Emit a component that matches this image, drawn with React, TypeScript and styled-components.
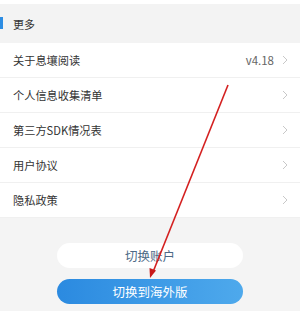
import React from "react";
import styled, { createGlobalStyle } from "styled-components";

const Global = createGlobalStyle`
  html, body {
    margin: 0;
    padding: 0;
    background: #f4f4f4;
  }
  body {
    font-family: "Noto Sans CJK SC", "Noto Sans", sans-serif;
  }
`;

const Page = styled.div`
  position: relative;
  width: 300px;
  height: 311px;
  overflow: hidden;
  background: #f4f4f4;
  border-top: 4px solid #fff;
  box-sizing: border-box;
`;

const SectionHeader = styled.div`
  display: flex;
  align-items: center;
  height: 39px;
  background: #f3f3f3;
`;

const HeaderMark = styled.div`
  width: 3px;
  height: 12px;
  background: #2d8de3;
  margin-right: 10px;
  margin-top: -1px;
`;

const HeaderTitle = styled.span`
  font-size: 11px;
  color: #333;
`;

const List = styled.div`
  background: #fff;
`;

const Row = styled.div`
  display: flex;
  align-items: center;
  height: 35px;
  padding: 0 12px 0 13px;
  border-bottom: 1px solid #f0f0f0;
  box-sizing: border-box;
`;

const Label = styled.span`
  flex: 1;
  font-size: 11.2px;
  color: #333;
`;

const Value = styled.span`
  font-size: 11.5px;
  color: #666;
  margin-right: 8px;
`;

const Chevron = () => (
  <svg width="6" height="10" viewBox="0 0 6 10">
    <path d="M1 1l4 4-4 4" fill="none" stroke="#c8c8c8" strokeWidth="1" />
  </svg>
);

const Buttons = styled.div`
  display: flex;
  flex-direction: column;
  align-items: center;
  gap: 11px;
  padding-top: 25px;
`;

const Button = styled.div<{ primary?: boolean }>`
  width: 186px;
  height: 25px;
  border-radius: 13px;
  display: flex;
  align-items: center;
  justify-content: center;
  font-size: 12.5px;
  color: ${(p) => (p.primary ? "#fff" : "#4d6a86")};
  background: ${(p) =>
    p.primary ? "linear-gradient(90deg, #2b8ae0, #4ea9ec)" : "#fff"};
`;

const Annotation = styled.svg`
  position: absolute;
  left: 0;
  top: -4px;
  pointer-events: none;
`;

const rows = [
  { label: "关于息壤阅读", value: "v4.18" },
  { label: "个人信息收集清单" },
  { label: "第三方SDK情况表" },
  { label: "用户协议" },
  { label: "隐私政策" },
];

export default function App() {
  return (
    <>
      <Global />
      <Page>
        <SectionHeader>
          <HeaderMark />
          <HeaderTitle>更多</HeaderTitle>
        </SectionHeader>
        <List>
          {rows.map((r) => (
            <Row key={r.label}>
              <Label>{r.label}</Label>
              {r.value && <Value>{r.value}</Value>}
              <Chevron />
            </Row>
          ))}
        </List>
        <Buttons>
          <Button>切换账户</Button>
          <Button primary>切换到海外版</Button>
        </Buttons>
        <Annotation width="300" height="311" viewBox="0 0 300 311">
          <line x1="228" y1="85" x2="153" y2="272" stroke="#d42020" strokeWidth="1.6" />
          <path d="M150 278 L149.5 268 L156 270.5 Z" fill="#c81818" />
        </Annotation>
      </Page>
    </>
  );
}
